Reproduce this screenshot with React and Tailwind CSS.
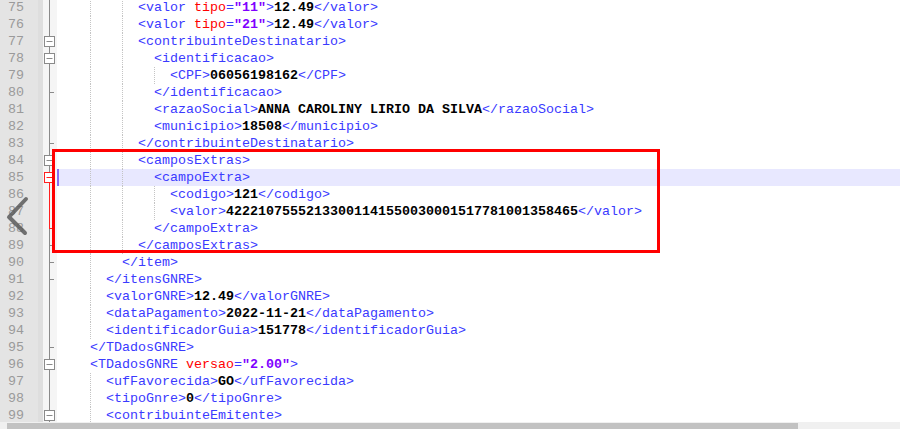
import React from 'react'

// Linhas do XML visíveis no editor (indentação em colunas)
const LINES = [
    [75, 10, '<valor tipo="11">12.49</valor>', 'line'],
    [76, 10, '<valor tipo="21">12.49</valor>', 'line'],
    [77, 10, '<contribuinteDestinatario>', 'box'],
    [78, 12, '<identificacao>', 'box'],
    [79, 14, '<CPF>06056198162</CPF>', 'line'],
    [80, 12, '</identificacao>', 'end'],
    [81, 12, '<razaoSocial>ANNA CAROLINY LIRIO DA SILVA</razaoSocial>', 'line'],
    [82, 12, '<municipio>18508</municipio>', 'line'],
    [83, 10, '</contribuinteDestinatario>', 'end'],
    [84, 10, '<camposExtras>', 'box'],
    [85, 12, '<campoExtra>', 'boxR'],
    [86, 14, '<codigo>121</codigo>', 'lineR'],
    [87, 14, '<valor>42221075552133001141550030001517781001358465</valor>', 'lineR'],
    [88, 12, '</campoExtra>', 'endR'],
    [89, 10, '</camposExtras>', 'end'],
    [90, 8, '</item>', 'end'],
    [91, 6, '</itensGNRE>', 'end'],
    [92, 6, '<valorGNRE>12.49</valorGNRE>', 'line'],
    [93, 6, '<dataPagamento>2022-11-21</dataPagamento>', 'line'],
    [94, 6, '<identificadorGuia>151778</identificadorGuia>', 'line'],
    [95, 4, '</TDadosGNRE>', 'end'],
    [96, 4, '<TDadosGNRE versao="2.00">', 'box'],
    [97, 6, '<ufFavorecida>GO</ufFavorecida>', 'line'],
    [98, 6, '<tipoGnre>0</tipoGnre>', 'line'],
    [99, 6, '<contribuinteEmitente>', 'box'],
]

// quebra uma linha em pedaços coloridos (tag, atributo, valor, texto)
function tokenize(s) {
    const out = []
    let i = 0
    while (i < s.length) {
        if (s[i] === '<') {
            const end = s.indexOf('>', i)
            const m = s.slice(i, end + 1).match(/^(<\/?\w+)(.*?)(>)$/)
            out.push(['t', m[1]])
            const re = /(\s+)(\w+)(=)("[^"]*")/g
            let mm
            while ((mm = re.exec(m[2]))) {
                out.push(['t', mm[1]])
                out.push(['a', mm[2]])
                out.push(['t', mm[3]])
                out.push(['v', mm[4]])
            }
            out.push(['t', '>'])
            i = end + 1
        } else {
            const n = s.indexOf('<', i)
            const e = n === -1 ? s.length : n
            out.push(['x', s.slice(i, e)])
            i = e
        }
    }
    return out
}

const TOKEN_CLASS = {
    t: 'text-[#3a3aff]',
    a: 'text-[#ff0000]',
    v: 'text-[#8000ff] font-bold',
    x: 'text-black font-bold',
}

// marcador da margem de dobra (fold)
const FoldMark = ({ kind }) => {
    const gray = '#8a8a8a'
    const red = '#ff2020'
    const isRed = kind.endsWith('R')
    const base = kind.replace('R', '')
    const c = isRed ? red : gray
    return (
        <svg width="14" height="17" viewBox="0 0 14 17" className="block">
            {base === 'line' && <line x1="6.5" y1="0" x2="6.5" y2="17" stroke={c} />}
            {base === 'end' && (
                <>
                    <line x1="6.5" y1="0" x2="6.5" y2="9" stroke={c} />
                    <line x1="6.5" y1="9" x2="6.5" y2="17" stroke={gray} />
                    <line x1="6.5" y1="8.5" x2="11" y2="8.5" stroke={c} />
                </>
            )}
            {base === 'box' && (
                <>
                    <line x1="6.5" y1="0" x2="6.5" y2="4" stroke={gray} />
                    <rect x="1.5" y="3.5" width="10" height="10" fill="#fff" stroke={c} />
                    <line x1="3.5" y1="8.5" x2="9.5" y2="8.5" stroke={c} />
                    <line x1="6.5" y1="14" x2="6.5" y2="17" stroke={c} />
                </>
            )}
        </svg>
    )
}

const Indent = ({ cols }) => {
    const chunks = []
    let c = 0
    while (c < cols) {
        const w = Math.min(4, cols - c)
        chunks.push({ start: c, w })
        c += w
    }
    return chunks.map((ch) => (
        <span
            key={ch.start}
            className={`inline-block h-[17px] align-top ${ch.w === 4 ? 'w-[32px]' : ch.w === 2 ? 'w-[16px]' : 'w-[8px]'} ${ch.start > 0 ? 'border-l border-dotted border-[#c4c4c4]' : ''}`}
        />
    ))
}

export default function App() {
    return (
        <div className="relative w-[900px] h-[429px] bg-white overflow-hidden" style={{ fontFamily: '"Liberation Mono", "Courier New", monospace' }}>
            <div className="h-[422px] overflow-hidden">
                <div className="-mt-px">
                    {LINES.map(([num, indent, code, fold]) => (
                        <div key={num} className="flex h-[17px] text-[13.33px] leading-[17px]">
                            <div className="w-[38px] shrink-0 bg-[#e4e4e4] text-right pr-[14px] text-[#9a9a9a]">{num}</div>
                            <div className="w-[5px] shrink-0 bg-[#dedede]" />
                            <div className="w-[14px] shrink-0 bg-[#f5f5f5]">
                                <FoldMark kind={fold} />
                            </div>
                            <div className={`flex-1 whitespace-pre pl-px ${num === 85 ? 'bg-[#e8e8ff] shadow-[inset_2px_0_0_#8a6cf0]' : ''}`}>
                                <Indent cols={indent} />
                                {tokenize(code).map(([k, s], i) => (
                                    <span key={i} className={TOKEN_CLASS[k]}>{s}</span>
                                ))}
                            </div>
                        </div>
                    ))}
                </div>
            </div>

            {/* barra de rolagem horizontal */}
            <div className="h-[7px] bg-[#f0f0f0] pt-px">
                <div className="ml-[7px] w-[791px] h-[6px] bg-[#c2c2c2]" />
            </div>

            {/* destaque vermelho */}
            <div className="absolute left-[52px] top-[149px] w-[608px] h-[104px] border-[3px] border-[#ff0000]" />

            {/* seta de navegação */}
            <svg className="absolute left-[4px] top-[196px]" width="26" height="40" viewBox="0 0 26 40">
                <polyline points="22,3 5,21 21,37" fill="none" stroke="#5a5a5a" strokeOpacity="0.85" strokeWidth="4" strokeLinecap="round" strokeLinejoin="round" />
            </svg>
        </div>
    )
}
